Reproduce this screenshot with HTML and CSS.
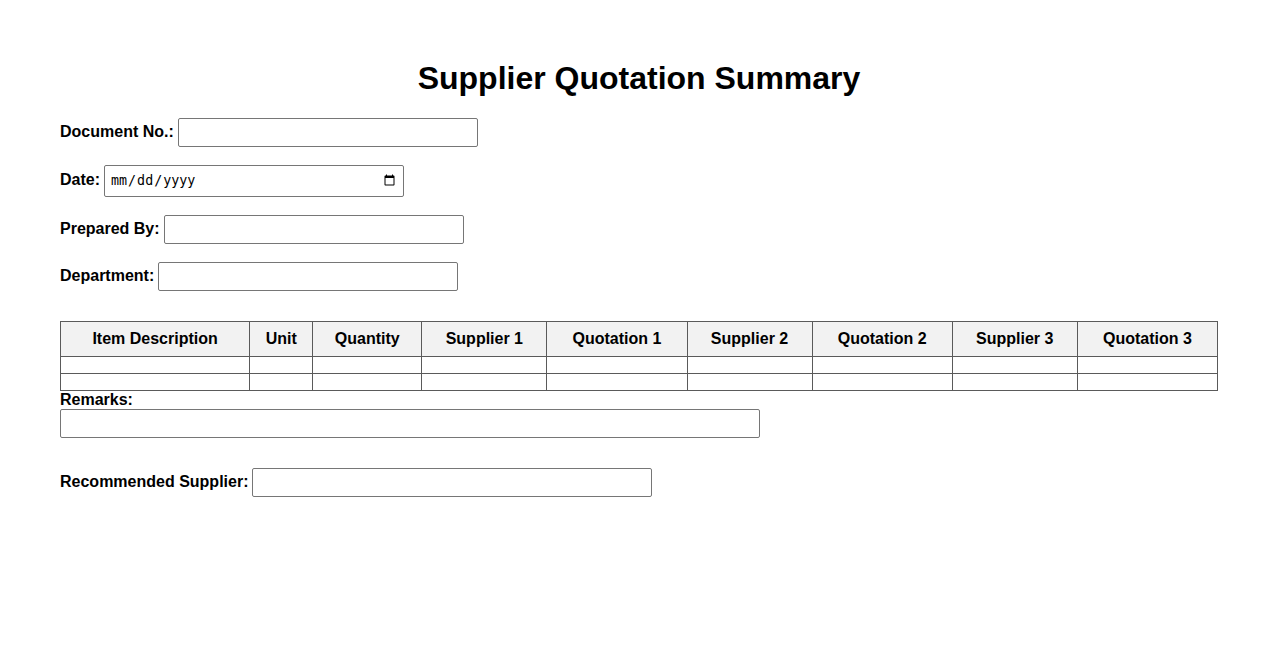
FILE: index.html
```html
<!DOCTYPE html>
<html lang="en">
<head>
<meta charset="utf-8">
<title>Supplier Quotation Summary</title>
<link rel="stylesheet" href="styles.css">
</head>
<body>
<div class="page">
  <h1 class="title">Supplier Quotation Summary</h1>

  <div class="field">
    <label class="label" for="doc">Document No.:</label>
    <input class="input" id="doc" type="text">
  </div>
  <div class="field">
    <label class="label" for="date">Date:</label>
    <input class="input date" id="date" type="date">
  </div>
  <div class="field">
    <label class="label" for="prep">Prepared By:</label>
    <input class="input" id="prep" type="text">
  </div>
  <div class="field field-last">
    <label class="label" for="dept">Department:</label>
    <input class="input" id="dept" type="text">
  </div>

  <table class="quote-table">
    <thead>
      <tr>
        <th class="c-item">Item Description</th>
        <th class="c-unit">Unit</th>
        <th class="c-qty">Quantity</th>
        <th class="c-sup">Supplier 1</th>
        <th class="c-quo">Quotation 1</th>
        <th class="c-sup">Supplier 2</th>
        <th class="c-quo">Quotation 2</th>
        <th class="c-sup">Supplier 3</th>
        <th class="c-quo">Quotation 3</th>
      </tr>
    </thead>
    <tbody>
      <tr><td></td><td></td><td></td><td></td><td></td><td></td><td></td><td></td><td></td></tr>
      <tr><td></td><td></td><td></td><td></td><td></td><td></td><td></td><td></td><td></td></tr>
    </tbody>
  </table>

  <label class="label block" for="remarks">Remarks:</label>
  <input class="input wide" id="remarks" type="text">

  <div class="field rec">
    <label class="label" for="rec">Recommended Supplier:</label>
    <input class="input mid" id="rec" type="text">
  </div>
</div>
</body>
</html>
```

FILE: styles.css
```css
html, body {
  margin: 0;
  padding: 0;
  background: #ffffff;
}

body {
  font-family: "Liberation Sans", Arial, sans-serif;
  color: #000;
}

.page {
  padding: 39px 60px 40px;
}

.title {
  font-size: 32px;
  font-weight: bold;
  text-align: center;
  margin: 21px 0;
  line-height: 37px;
}

.field {
  display: flex;
  align-items: baseline;
  gap: 4px;
  margin-bottom: 18px;
}

.field-last {
  margin-bottom: 30px;
}

.label {
  font-weight: bold;
  font-size: 16px;
}

.label.block {
  display: block;
  line-height: 18px;
  height: 18px;
}

.input {
  width: 300px;
  height: 29px;
  box-sizing: border-box;
  padding: 5px;
  border: 1px solid #767676;
  border-radius: 2px;
  font-size: 13.33px;
  margin: 0;
}

.input.date {
  height: 32px;
}

.input.wide {
  width: 700px;
  display: block;
}

.input.mid {
  width: 400px;
}

.rec {
  margin-top: 30px;
}

.quote-table {
  width: 100%;
  border-collapse: collapse;
  font-size: 16px;
}

.quote-table th,
.quote-table td {
  border: 1px solid #5a5a5a;
  padding: 8px;
  text-align: center;
}

.quote-table th {
  background: #f2f2f2;
  font-weight: bold;
  line-height: 18px;
}

.quote-table td {
  height: 0;
  padding: 8px;
  line-height: 0;
}

.c-item { width: 172px; }
.c-unit { width: 46px; }
.c-qty { width: 92px; }
.c-sup { width: 108px; }
.c-quo { width: 123px; }
```
